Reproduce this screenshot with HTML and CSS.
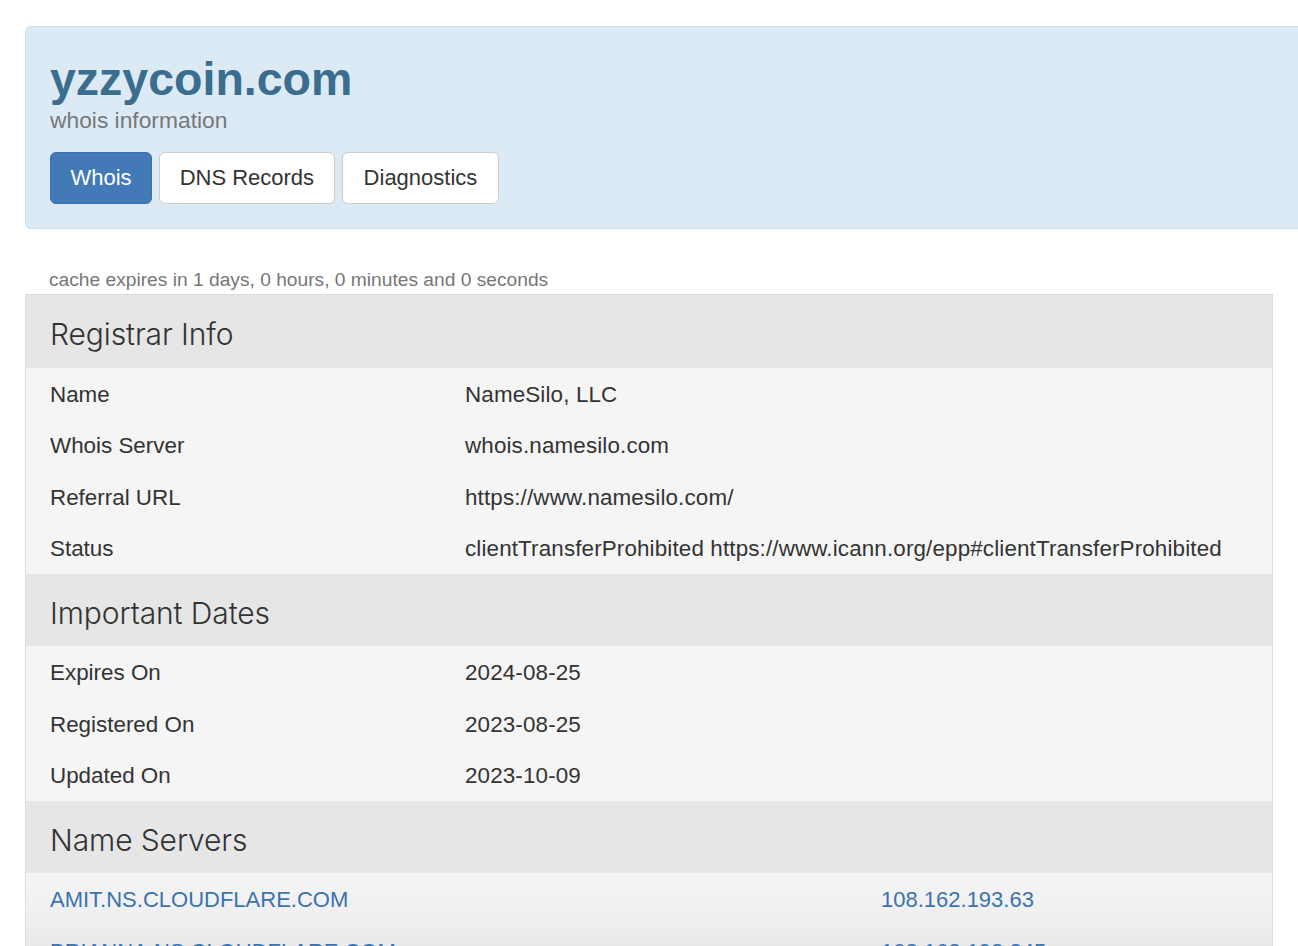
FILE: index.html
```html
<!DOCTYPE html>
<html lang="en">
<head>
<meta charset="utf-8">
<title>yzzycoin.com whois information</title>
<link rel="stylesheet" href="styles.css">
</head>
<body>
<div class="page">
  <header class="jumbotron">
    <h1 class="domain">yzzycoin.com</h1>
    <p class="subtitle">whois information</p>
    <nav class="tabs">
      <a class="btn btn-primary" href="#">Whois</a>
      <a class="btn" href="#">DNS Records</a>
      <a class="btn btn-wide" href="#">Diagnostics</a>
    </nav>
  </header>

  <p class="cache">cache expires in 1 days, 0 hours, 0 minutes and 0 seconds</p>

  <section class="data">
    <h2 class="section-head">Registrar Info</h2>
    <div class="row"><span class="label">Name</span><span class="value">NameSilo, LLC</span></div>
    <div class="row"><span class="label">Whois Server</span><span class="value">whois.namesilo.com</span></div>
    <div class="row"><span class="label">Referral URL</span><span class="value">https://www.namesilo.com/</span></div>
    <div class="row"><span class="label">Status</span><span class="value">clientTransferProhibited https://www.icann.org/epp#clientTransferProhibited</span></div>

    <h2 class="section-head">Important Dates</h2>
    <div class="row"><span class="label">Expires On</span><span class="value">2024-08-25</span></div>
    <div class="row"><span class="label">Registered On</span><span class="value">2023-08-25</span></div>
    <div class="row"><span class="label">Updated On</span><span class="value">2023-10-09</span></div>

    <h2 class="section-head">Name Servers</h2>
    <div class="ns-list">
      <div class="row ns"><a class="label link" href="#">AMIT.NS.CLOUDFLARE.COM</a><a class="ip link" href="#">108.162.193.63</a></div>
      <div class="row ns"><a class="label link" href="#">BRIANNA.NS.CLOUDFLARE.COM</a><a class="ip link" href="#">108.162.192.245</a></div>
    </div>
  </section>
</div>
</body>
</html>
```

FILE: styles.css
```css
html, body {
  margin: 0;
  padding: 0;
  overflow: hidden;
  background: #ffffff;
}

body {
  font-family: "Liberation Sans", Arial, Helvetica, sans-serif;
  color: #333333;
}

.page {
  padding: 26px 0 0 25px;
}

.jumbotron {
  margin-right: -30px;
  background: #dceaf5;
  border: 1px solid #c9dfeb;
  border-radius: 6px;
  padding: 27px 25px 24px 24px;
}

.domain {
  margin: 0;
  font-size: 46.5px;
  line-height: 50px;
  font-weight: bold;
  color: #3b6d8e;
}

.subtitle {
  margin: 3px 0 0 0;
  font-size: 22.8px;
  line-height: 26px;
  color: #777777;
}

.tabs {
  display: flex;
  gap: 7px;
  margin-top: 19px;
}

.btn {
  display: block;
  font-size: 22px;
  line-height: 26px;
  padding: 12px 19.5px;
  border: 1px solid #cccccc;
  border-radius: 6px;
  background: #ffffff;
  color: #333333;
  text-decoration: none;
}

.btn-wide {
  padding: 12px 21px;
}

.btn-primary {
  background: #4279b6;
  border-color: #3c70aa;
  color: #ffffff;
}

.cache {
  margin: 39px 0 2px 0;
  padding-left: 24px;
  font-size: 19.2px;
  line-height: 24px;
  color: #777777;
}

.data {
  margin-right: 25px;
  border: 1px solid #dcdcdc;
  border-bottom: 0;
  background: #f5f5f5;
}

.section-head {
  margin: 0;
  background: #e6e6e6;
  font-family: Inter, Roboto, "Liberation Sans", sans-serif;
  font-weight: 300;
  font-size: 30px;
  line-height: 42.5px;
  letter-spacing: -0.1px;
  padding: 18px 24px 12px 24px;
  color: #333333;
}

.row {
  display: grid;
  grid-template-columns: 439px 1fr;
  font-size: 22.4px;
  line-height: 30.5px;
  padding: 12px 0 9px 0;
}

.label {
  padding-left: 24px;
}

.value {
  letter-spacing: 0.14px;
}

.ns-list {
  background: linear-gradient(#f5f5f5 0px, #efefef 45px, #e6e6e6 80px);
}

.row.ns {
  grid-template-columns: 855px 1fr;
  font-size: 22px;
}

.link {
  color: #3c72ad;
  text-decoration: none;
}
```
